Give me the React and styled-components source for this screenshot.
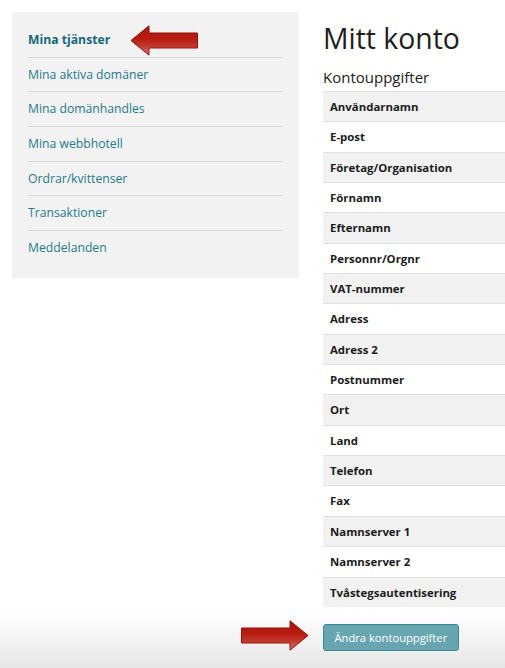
import React from "react";
import styled, { createGlobalStyle } from "styled-components";

const Global = createGlobalStyle`
  html, body { margin: 0; padding: 0; }
  body {
    min-height: 668px;
    font-family: "Open Sans", "Liberation Sans", sans-serif;
    color: #222;
    background: linear-gradient(to bottom, #fff 0, #fff 612px, #e6e6e6 668px);
    background-repeat: no-repeat;
    overflow: hidden;
  }
`;

const Page = styled.div`
  position: relative;
  display: flex;
  gap: 24px;
  padding: 12px 0 0 12px;
  min-height: 656px;
`;

const Sidebar = styled.nav`
  flex: 0 0 287px;
  align-self: flex-start;
  box-sizing: border-box;
  background: #f2f2f2;
  padding: 11px 16px 12px 16px;
`;

const NavItem = styled.a`
  display: block;
  height: 34.7px;
  line-height: 34.7px;
  box-sizing: border-box;
  font-size: 12.2px;
  font-weight: ${(p) => (p.$active ? 700 : 400)};
  color: ${(p) => (p.$active ? "#17697a" : "#1f7a8c")};
  text-decoration: none;
  border-bottom: ${(p) => (p.$last ? "none" : "1px solid #d6d6d6")};
`;

const Content = styled.main`
  flex: 1;
  min-width: 0;
`;

const Title = styled.h1`
  margin: 9px 0 0 0;
  font-size: 28.4px;
  line-height: 35px;
  font-weight: 400;
  color: #1e1e1e;
`;

const Subtitle = styled.h2`
  margin: 10.5px 0 4.5px 0;
  font-size: 15px;
  line-height: 20px;
  font-weight: 400;
  color: #222;
`;

const Table = styled.div`
  display: flex;
  flex-direction: column;
`;

const Row = styled.div`
  box-sizing: border-box;
  height: 30.35px;
  line-height: 29.35px;
  padding: 0 7px;
  border-top: 1px solid #e0e0e0;
  background: ${(p) => (p.$shaded ? "#f1f1f1" : "#ffffff")};
  font-size: 11.4px;
  font-weight: 700;
  color: #1c1c1c;
  white-space: nowrap;
`;

const Button = styled.button`
  margin-top: 17px;
  box-sizing: border-box;
  height: 27px;
  padding: 0 10.5px;
  border: 1px solid #3d8894;
  border-radius: 3px;
  background: #67a6b1;
  color: #fff;
  font-family: "Open Sans", "Liberation Sans", sans-serif;
  font-size: 11.2px;
  line-height: 25px;
  cursor: pointer;
`;

const ArrowWrap = styled.div`
  position: absolute;
  left: ${(p) => p.$x}px;
  top: ${(p) => p.$y}px;
  width: 68px;
  height: 31px;
  transform: ${(p) => (p.$left ? "scaleX(-1)" : "none")};
  line-height: 0;
`;

function Arrow({ x, y, left, id }) {
  return (
    <ArrowWrap $x={x} $y={y} $left={left}>
      <svg width="68" height="31" viewBox="0 0 68 31">
        <defs>
          <linearGradient id={id} x1="0" y1="0" x2="0" y2="1">
            <stop offset="0" stopColor="#a8160e" />
            <stop offset="0.45" stopColor="#b81c12" />
            <stop offset="0.7" stopColor="#c23a30" />
            <stop offset="1" stopColor="#d77a78" />
          </linearGradient>
        </defs>
        <path
          d="M0.5 8 L49 8 L49 0.8 L67 15.5 L49 30.2 L49 23 L0.5 23 Z"
          fill={`url(#${id})`}
          stroke="#9a0f0a"
          strokeWidth="1"
          strokeLinejoin="miter"
        />
      </svg>
    </ArrowWrap>
  );
}

const navItems = [
  "Mina tjänster",
  "Mina aktiva domäner",
  "Mina domänhandles",
  "Mina webbhotell",
  "Ordrar/kvittenser",
  "Transaktioner",
  "Meddelanden",
];

const fields = [
  "Användarnamn",
  "E-post",
  "Företag/Organisation",
  "Förnamn",
  "Efternamn",
  "Personnr/Orgnr",
  "VAT-nummer",
  "Adress",
  "Adress 2",
  "Postnummer",
  "Ort",
  "Land",
  "Telefon",
  "Fax",
  "Namnserver 1",
  "Namnserver 2",
  "Tvåstegsautentisering",
];

export default function App() {
  return (
    <>
      <Global />
      <Page>
        <Sidebar>
          {navItems.map((t, i) => (
            <NavItem
              key={t}
              href="#"
              $active={i === 0}
              $last={i === navItems.length - 1}
            >
              {t}
            </NavItem>
          ))}
        </Sidebar>
        <Content>
          <Title>Mitt konto</Title>
          <Subtitle>Kontouppgifter</Subtitle>
          <Table>
            {fields.map((f, i) => (
              <Row key={f} $shaded={i % 2 === 0}>
                {f}
              </Row>
            ))}
          </Table>
          <Button>Ändra kontouppgifter</Button>
        </Content>
        <Arrow id="arrowL" x={130} y={25} left />
        <Arrow id="arrowR" x={241} y={620} />
      </Page>
    </>
  );
}
